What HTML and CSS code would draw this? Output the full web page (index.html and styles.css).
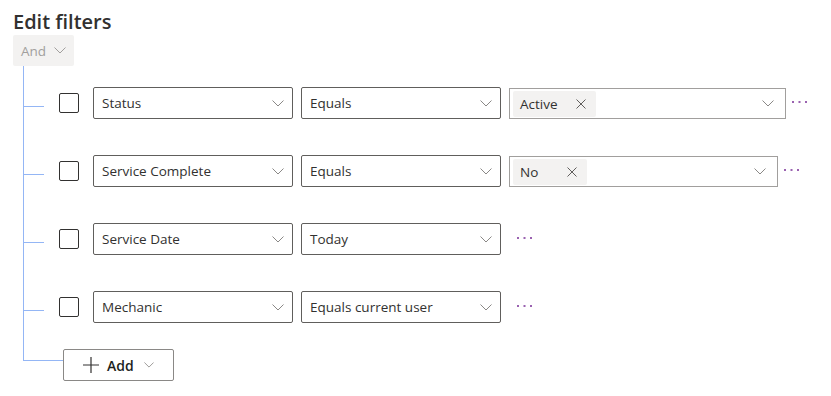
FILE: index.html
```html
<!DOCTYPE html>
<html lang="en">
<head>
    <meta charset="UTF-8">
    <title>Edit filters</title>
    <link rel="stylesheet" href="styles.css">
</head>
<body>
    <div class="panel">
        <h2 class="title">Edit filters</h2>

        <div class="and-btn">
            <span>And</span>
            <svg class="chev" width="12" height="7" viewBox="0 0 12 7"><polyline points="0.5,0.5 6,6 11.5,0.5" /></svg>
        </div>

        <div class="tree">
            <div class="row">
                <div class="branch"></div>
                <div class="check"></div>
                <div class="dropdown field">
                    <span>Status</span>
                    <svg class="chev" width="12" height="7" viewBox="0 0 12 7"><polyline points="0.5,0.5 6,6 11.5,0.5" /></svg>
                </div>
                <div class="dropdown">
                    <span>Equals</span>
                    <svg class="chev" width="12" height="7" viewBox="0 0 12 7"><polyline points="0.5,0.5 6,6 11.5,0.5" /></svg>
                </div>
                <div class="value wide">
                    <div class="tag">
                        <span class="tag-text">Active</span>
                        <svg class="x" width="10" height="10" viewBox="0 0 10 10"><path d="M0.5 0.5L9.5 9.5M9.5 0.5L0.5 9.5" /></svg>
                    </div>
                    <svg class="chev" width="12" height="7" viewBox="0 0 12 7"><polyline points="0.5,0.5 6,6 11.5,0.5" /></svg>
                </div>
                <svg class="more" width="16" height="2" viewBox="0 0 16 2"><rect x="0" y="0" width="2" height="2"/><rect x="6.5" y="0" width="2" height="2"/><rect x="13" y="0" width="2" height="2"/></svg>
            </div>

            <div class="row">
                <div class="branch"></div>
                <div class="check"></div>
                <div class="dropdown field">
                    <span>Service Complete</span>
                    <svg class="chev" width="12" height="7" viewBox="0 0 12 7"><polyline points="0.5,0.5 6,6 11.5,0.5" /></svg>
                </div>
                <div class="dropdown">
                    <span>Equals</span>
                    <svg class="chev" width="12" height="7" viewBox="0 0 12 7"><polyline points="0.5,0.5 6,6 11.5,0.5" /></svg>
                </div>
                <div class="value narrow">
                    <div class="tag">
                        <span class="tag-text short">No</span>
                        <svg class="x" width="10" height="10" viewBox="0 0 10 10"><path d="M0.5 0.5L9.5 9.5M9.5 0.5L0.5 9.5" /></svg>
                    </div>
                    <svg class="chev" width="12" height="7" viewBox="0 0 12 7"><polyline points="0.5,0.5 6,6 11.5,0.5" /></svg>
                </div>
                <svg class="more" width="16" height="2" viewBox="0 0 16 2"><rect x="0" y="0" width="2" height="2"/><rect x="6.5" y="0" width="2" height="2"/><rect x="13" y="0" width="2" height="2"/></svg>
            </div>

            <div class="row">
                <div class="branch"></div>
                <div class="check"></div>
                <div class="dropdown field">
                    <span>Service Date</span>
                    <svg class="chev" width="12" height="7" viewBox="0 0 12 7"><polyline points="0.5,0.5 6,6 11.5,0.5" /></svg>
                </div>
                <div class="dropdown">
                    <span>Today</span>
                    <svg class="chev" width="12" height="7" viewBox="0 0 12 7"><polyline points="0.5,0.5 6,6 11.5,0.5" /></svg>
                </div>
                <svg class="more far" width="16" height="2" viewBox="0 0 16 2"><rect x="0" y="0" width="2" height="2"/><rect x="6.5" y="0" width="2" height="2"/><rect x="13" y="0" width="2" height="2"/></svg>
            </div>

            <div class="row">
                <div class="branch"></div>
                <div class="check"></div>
                <div class="dropdown field">
                    <span>Mechanic</span>
                    <svg class="chev" width="12" height="7" viewBox="0 0 12 7"><polyline points="0.5,0.5 6,6 11.5,0.5" /></svg>
                </div>
                <div class="dropdown">
                    <span>Equals current user</span>
                    <svg class="chev" width="12" height="7" viewBox="0 0 12 7"><polyline points="0.5,0.5 6,6 11.5,0.5" /></svg>
                </div>
                <svg class="more far" width="16" height="2" viewBox="0 0 16 2"><rect x="0" y="0" width="2" height="2"/><rect x="6.5" y="0" width="2" height="2"/><rect x="13" y="0" width="2" height="2"/></svg>
            </div>
        </div>

        <div class="add-row">
            <div class="corner"></div>
            <div class="add-btn">
                <svg class="plus" width="16" height="16" viewBox="0 0 16 16"><path d="M8 0V16M0 8H16" /></svg>
                <span>Add</span>
                <svg class="chev" width="10" height="6" viewBox="0 0 12 7"><polyline points="0.5,0.5 6,6 11.5,0.5" /></svg>
            </div>
        </div>
    </div>
</body>
</html>
```

FILE: styles.css
```css
body {
    margin: 0;
    padding: 0;
    background: #ffffff;
    font-family: "Segoe UI", "Open Sans", sans-serif;
    color: #323130;
}

.panel {
    padding: 9px 13px 0 13px;
}

.title {
    margin: 0;
    font-size: 20px;
    font-weight: 600;
    line-height: 25px;
    color: #323130;
}

.and-btn {
    display: flex;
    align-items: center;
    gap: 8px;
    width: 61px;
    height: 31px;
    box-sizing: border-box;
    margin-top: 1px;
    padding-left: 8px;
    background: #f3f2f1;
    border-radius: 2px;
    color: #a19f9d;
    font-size: 13.5px;
}

.and-btn .chev polyline {
    stroke: #a19f9d;
}

.chev polyline {
    fill: none;
    stroke: #8a8886;
    stroke-width: 1;
}

.tree {
    display: flex;
    flex-direction: column;
    gap: 36px;
    margin-left: 10px;
    padding-top: 21px;
    border-left: 1px solid #94b6f5;
}

.row {
    display: flex;
    align-items: flex-start;
    height: 32px;
}

.branch {
    width: 20px;
    height: 1px;
    margin-top: 19px;
    background: #94b6f5;
}

.check {
    width: 20px;
    height: 20px;
    box-sizing: border-box;
    margin: 6px 0 0 15px;
    border: 1px solid #323130;
    border-radius: 2px;
}

.dropdown {
    display: flex;
    align-items: center;
    justify-content: space-between;
    width: 200px;
    height: 32px;
    box-sizing: border-box;
    margin-left: 8px;
    padding: 0 8px 0 8px;
    border: 1px solid #605e5c;
    border-radius: 2px;
    font-size: 13.5px;
}

.dropdown.field {
    margin-left: 14px;
}

.value {
    display: flex;
    align-items: center;
    justify-content: space-between;
    height: 31px;
    box-sizing: border-box;
    margin: 1px 0 0 8px;
    padding: 0 11px 0 3px;
    border: 1px solid #a19f9d;
}

.value.wide {
    width: 277px;
}

.value.narrow {
    width: 269px;
}

.tag {
    display: flex;
    align-items: center;
    height: 26px;
    padding-left: 7px;
    background: #f3f2f1;
    border-radius: 2px;
    font-size: 13.5px;
}

.tag-text {
    min-width: 37px;
    padding-right: 8px;
}

.tag-text.short {
    min-width: 29px;
}

.tag .x {
    margin: 0 10px;
}

.x path {
    stroke: #605e5c;
    stroke-width: 1;
}

.more {
    margin: 14px 0 0 6px;
    fill: #9a62b0;
}

.more.far {
    margin-left: 16px;
}

.add-row {
    display: flex;
    align-items: flex-start;
}

.corner {
    width: 40px;
    height: 38px;
    box-sizing: border-box;
    margin-left: 10px;
    border-left: 1px solid #94b6f5;
    border-bottom: 1px solid #94b6f5;
}

.add-btn {
    display: flex;
    align-items: center;
    width: 111px;
    height: 32px;
    box-sizing: border-box;
    margin-top: 26px;
    padding-left: 19px;
    border: 1px solid #8a8886;
    border-radius: 2px;
    font-size: 14px;
    font-weight: 600;
    color: #201f1e;
}

.plus path {
    stroke: #323130;
    stroke-width: 1.2;
}

.add-btn span {
    margin: 0 10px 0 8px;
}
```
